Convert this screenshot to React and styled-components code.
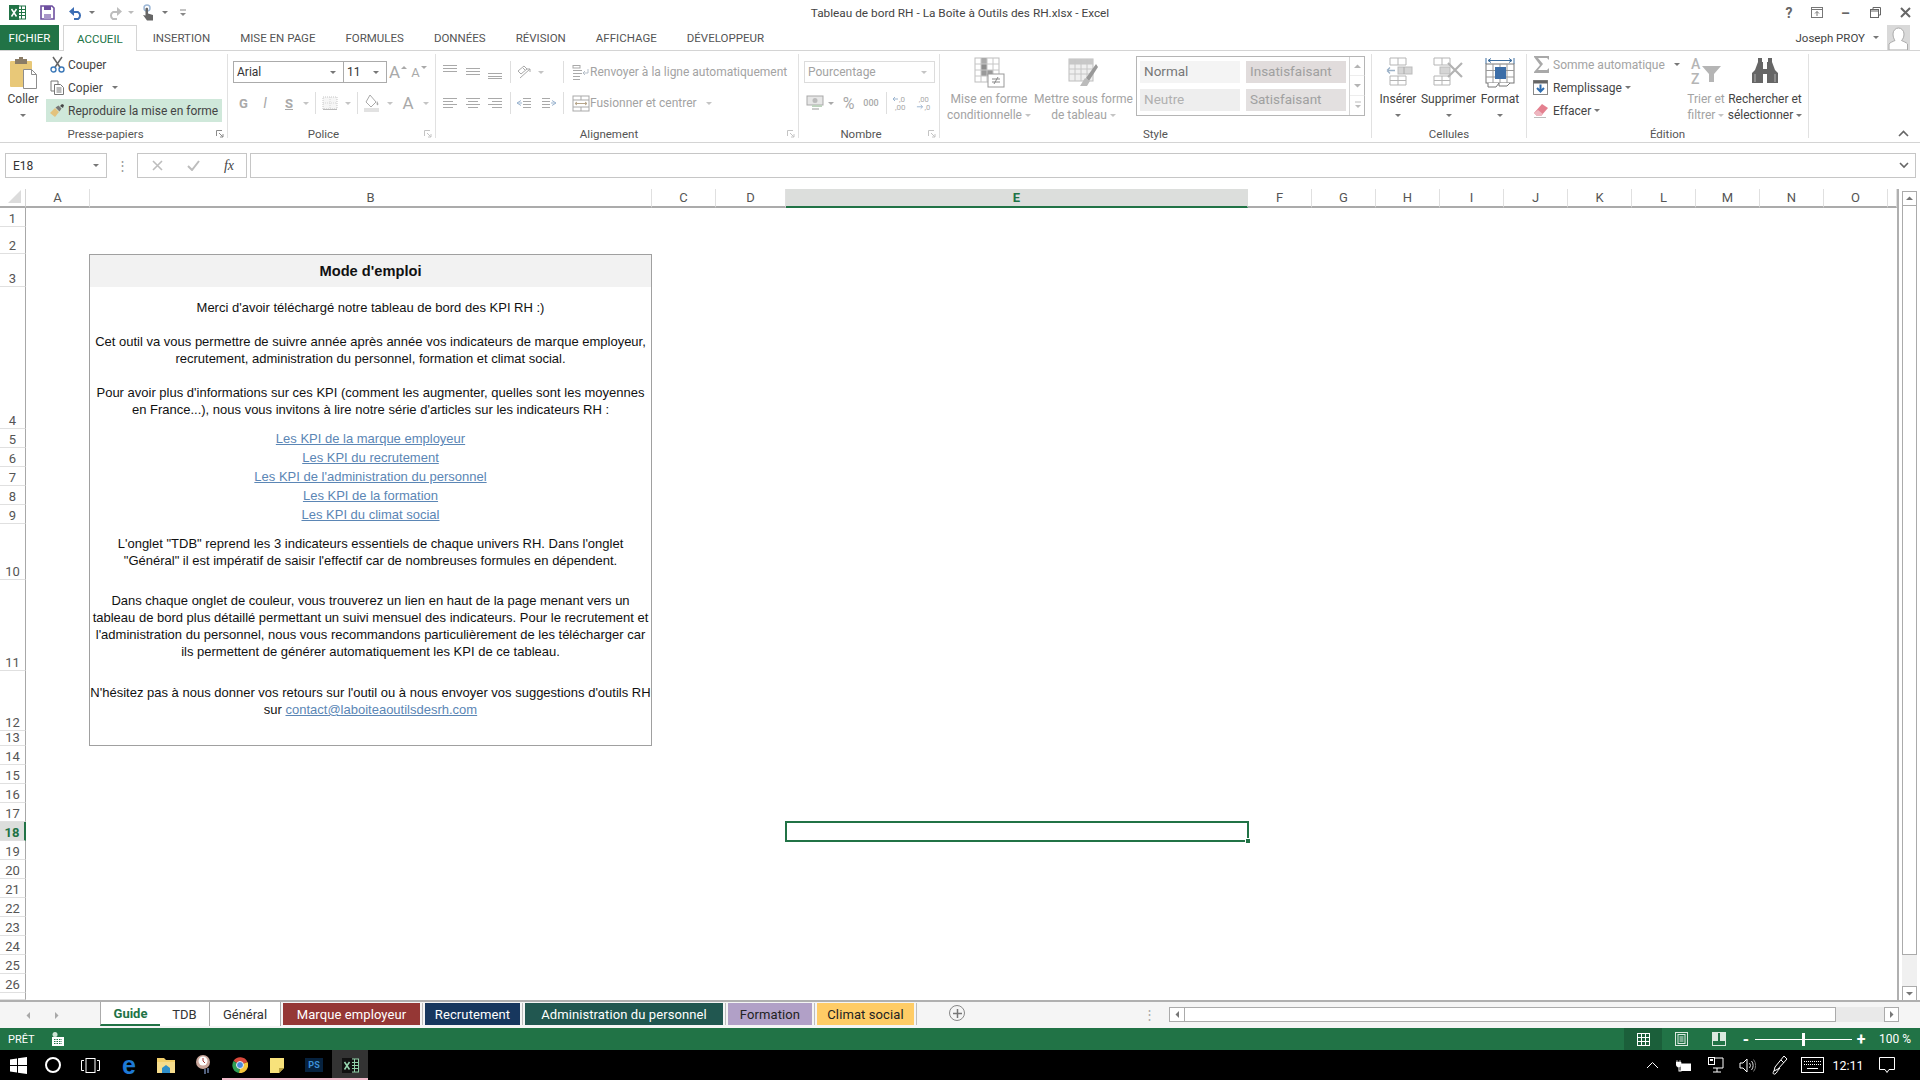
import React from "react";
import styled, { createGlobalStyle } from "styled-components";

const uiFont = '"Roboto", "Open Sans", "Liberation Sans", sans-serif';
const green = "#217346";
const gray = "#a9a9a9";
const textGray = "#a3a3a3";

const GlobalStyle = createGlobalStyle`
  html, body { margin: 0; padding: 0; background: #fff; }
  * { box-sizing: border-box; }
  #root { width: 1920px; height: 1080px; }
`;

const Page = styled.div`
  width: 1920px;
  height: 1080px;
  display: flex;
  flex-direction: column;
  overflow: hidden;
  background: #fff;
  font-family: ${uiFont};
  font-size: 12px;
  color: #444;
`;

/* ---------- shared bits ---------- */

const Cell = styled.span`
  display: inline-flex;
  align-items: center;
  justify-content: center;
  flex: none;
  width: ${(p) => p.$w}px;
  height: 100%;
  margin-left: ${(p) => p.$ml || 0}px;
  color: ${(p) => p.$color || "inherit"};
  font-size: ${(p) => p.$size || 12}px;
  font-weight: ${(p) => p.$weight || 400};
  font-style: ${(p) => (p.$italic ? "italic" : "normal")};
`;

const Caret = styled.i`
  display: inline-block;
  flex: none;
  width: 0;
  height: 0;
  border-left: 3px solid transparent;
  border-right: 3px solid transparent;
  border-top: 3px solid ${(p) => p.$color || "#777"};
`;

const CaretUp = styled.i`
  display: inline-block;
  flex: none;
  width: 0;
  height: 0;
  margin: 0 0 9px 1px;
  border-left: 3px solid transparent;
  border-right: 3px solid transparent;
  border-bottom: 3px solid ${gray};
`;

const CaretTop = styled(Caret)`
  margin: 0 0 9px 1px;
`;

const Sep = styled.span`
  flex: none;
  width: 1px;
  height: 100%;
  background: #dedede;
  margin: 0 ${(p) => p.$r || 0}px 0 ${(p) => p.$l || 0}px;
`;

/* ---------- icons ---------- */

const XlLogo = ({ dark }) => (
  <svg width="17" height="15" viewBox="0 0 17 15">
    <rect x="8" y="1" width="8.5" height="13" fill={dark ? "#111" : "#fff"} stroke={dark ? "#8fcfa8" : green} />
    <path d="M9 4.5h7M9 7.5h7M9 10.5h7M12.5 1v13" stroke={dark ? "#8fcfa8" : green} />
    <rect width="10" height="15" fill={dark ? "#111" : green} />
    <path d="M2.5 4l5 7.5M7.5 4l-5 7.5" stroke={dark ? "#9ad8b2" : "#fff"} strokeWidth="1.5" />
  </svg>
);
const SaveIcon = () => (
  <svg width="15" height="15" viewBox="0 0 15 15">
    <path d="M1 1h11l2 2v11H1z" fill="#fff" stroke="#6d4f9f" strokeWidth="1.6" />
    <rect x="4" y="1" width="7" height="4" fill="#6d4f9f" />
    <rect x="4" y="9" width="7" height="5" fill="#a997c8" />
  </svg>
);
const UndoIcon = ({ color = "#3c6eb4" }) => (
  <svg width="16" height="15" viewBox="0 0 16 15">
    <path d="M4 7h6a4 4 0 0 1 0 7H6" fill="none" stroke={color} strokeWidth="2" />
    <path d="M6 2v9L1 6.5z" fill={color} />
  </svg>
);
const RedoIcon = () => (
  <svg width="16" height="15" viewBox="0 0 16 15">
    <path d="M12 7H6a4 4 0 0 0 0 7h4" fill="none" stroke="#bdbdbd" strokeWidth="2" />
    <path d="M10 2v9l5-4.5z" fill="#bdbdbd" />
  </svg>
);
const TouchIcon = () => (
  <svg width="14" height="18" viewBox="0 0 14 18">
    <circle cx="6" cy="4" r="3" fill="none" stroke="#9db7d6" strokeWidth="1.5" />
    <path d="M4.5 4.5c0-1 2.5-1 2.5 0v5l5 1.5v5.5H6L2 11l2.5.5z" fill="#666" />
  </svg>
);
const Customize = () => (
  <svg width="8" height="8" viewBox="0 0 8 8">
    <path d="M1 1h6" stroke="#888" />
    <path d="M1 4h6L4 7z" fill="#888" />
  </svg>
);
const Launcher = ({ color = "#8a8a8a" }) => (
  <svg width="8" height="8" viewBox="0 0 8 8">
    <path d="M.5 6V.5H6" fill="none" stroke={color} />
    <path d="M3 3l4 4M7 4v3H4" fill="none" stroke={color} />
  </svg>
);
const PasteIcon = () => (
  <svg width="29" height="32" viewBox="0 0 29 32">
    <rect x="1" y="4" width="22" height="26" rx="1" fill="#e8c878" />
    <rect x="6" y="2" width="12" height="5" fill="#8a7c66" />
    <rect x="10" y="0" width="4" height="3" fill="#8a7c66" />
    <path d="M14.5 12.5h8l5 5v14h-13z" fill="#fff" stroke="#8d8d8d" />
    <path d="M22.5 12.5v5h5" fill="none" stroke="#8d8d8d" />
  </svg>
);
const ScissorsIcon = () => (
  <svg width="15" height="17" viewBox="0 0 15 17">
    <path d="M3 1l7.5 11M12 1L4.5 12" stroke="#666" strokeWidth="1.5" />
    <circle cx="3.5" cy="13.5" r="2.5" fill="none" stroke="#3d79b8" strokeWidth="1.4" />
    <circle cx="11.5" cy="13.5" r="2.5" fill="none" stroke="#3d79b8" strokeWidth="1.4" />
  </svg>
);
const CopyIcon = () => (
  <svg width="15" height="15" viewBox="0 0 15 15">
    <path d="M1 1h7v3M1 1v10h3" fill="none" stroke="#777" />
    <path d="M4.5 4.5h6l3 3v7h-9z" fill="#fff" stroke="#777" />
    <path d="M6.5 8h5M6.5 10h5M6.5 12h5" stroke="#777" />
  </svg>
);
const BrushIcon = () => (
  <svg width="16" height="15" viewBox="0 0 16 15">
    <path d="M1 10l5-5 4 4-4 5z" fill="#e3c27d" />
    <path d="M6.5 4.5l3-2 3 3-2 3z" fill="#777" />
    <path d="M11 3l2-2 2 1-1 3z" fill="#444" />
  </svg>
);
const Lines = ({ rows, w = 16, h = 14, color = gray }) => (
  <svg width={w} height={h} viewBox={`0 0 ${w} ${h}`}>
    {rows.map(([a, b, y], i) => (
      <path key={i} d={`M${a} ${y + 0.5}H${b}`} stroke={color} />
    ))}
  </svg>
);
const AlignTop = () => <Lines rows={[[1, 15, 0], [1, 15, 3], [1, 15, 6]]} />;
const AlignMid = () => <Lines rows={[[1, 15, 3], [1, 15, 6], [1, 15, 9]]} />;
const AlignBot = () => <Lines rows={[[1, 15, 8], [1, 15, 11], [1, 15, 13]]} />;
const AlignL = () => <Lines rows={[[1, 15, 2], [1, 11, 5], [1, 15, 8], [1, 11, 11]]} />;
const AlignC = () => <Lines rows={[[1, 15, 2], [3, 13, 5], [1, 15, 8], [3, 13, 11]]} />;
const AlignR = () => <Lines rows={[[1, 15, 2], [5, 15, 5], [1, 15, 8], [5, 15, 11]]} />;
const IndentL = () => (
  <svg width="16" height="13" viewBox="0 0 16 13">
    <path d="M7 1.5h8M7 4.5h8M7 7.5h8M7 10.5h8" stroke={gray} />
    <path d="M5 3.5L1 6l4 2.5M1 6h5" fill="none" stroke="#9cb5d0" />
  </svg>
);
const IndentR = () => (
  <svg width="16" height="13" viewBox="0 0 16 13">
    <path d="M1 1.5h8M1 4.5h8M1 7.5h8M1 10.5h8" stroke={gray} />
    <path d="M11 3.5L15 6l-4 2.5M15 6h-5" fill="none" stroke="#9cb5d0" />
  </svg>
);
const OrientIcon = () => (
  <svg width="16" height="15" viewBox="0 0 16 15">
    <path d="M2 6l6-5 3 3-6 5zM7 3l2 2" fill="none" stroke={gray} />
    <path d="M4 13L14 4M14 4h-3M14 4v3" fill="none" stroke={gray} />
  </svg>
);
const WrapIcon = () => (
  <svg width="18" height="15" viewBox="0 0 18 15">
    <rect x="1" y="0.5" width="7" height="2.5" fill="none" stroke={gray} />
    <path d="M1 5.5h9M1 8.5h9M1 11.5h7M1 14.5h7" stroke={gray} />
    <path d="M16 4v4h-5M13 6l-2 2 2 2" fill="none" stroke="#b6bfc9" />
  </svg>
);
const MergeIcon = () => (
  <svg width="18" height="17" viewBox="0 0 18 17">
    <rect x="1" y="1" width="16" height="15" fill="#fff" stroke={gray} />
    <path d="M1 5h16M1 12h16M9 1v4M9 12v4" stroke={gray} />
    <path d="M3 8.5h12M3 8.5l2-1.5M3 8.5l2 1.5M15 8.5l-2-1.5M15 8.5l-2 1.5" fill="none" stroke="#b6a58a" />
  </svg>
);
const BorderIcon = () => (
  <svg width="16" height="14" viewBox="0 0 16 14">
    <rect x="1" y="1" width="14" height="12" fill="#f6f6f6" stroke="#c6c6c6" strokeDasharray="1 1" />
    <path d="M8 1v12M1 7h14" stroke="#d6d6d6" strokeDasharray="1 1" />
    <path d="M1 13.5h14" stroke="#bbb" />
  </svg>
);
const FillIcon = () => (
  <svg width="17" height="18" viewBox="0 0 17 18">
    <path d="M6 1l6 7-5 5-5-5z" fill="#fff" stroke={gray} />
    <path d="M13 7c1 2 2 3 1 4s-2-1-1-4z" fill={gray} />
    <rect x="0" y="14" width="15" height="4" fill="#e2e2e2" />
  </svg>
);
const NumFormatIcon = () => (
  <svg width="18" height="17" viewBox="0 0 18 17">
    <rect x="1" y="1" width="16" height="9" fill="#e6e6e6" stroke={gray} />
    <circle cx="9" cy="5.5" r="2.5" fill="#bbb" />
    <rect x="6" y="10" width="10" height="2" fill="#bdd2bd" />
    <rect x="6" y="13" width="7" height="2" fill="#ccc" />
  </svg>
);
const DecMoreIcon = () => (
  <svg width="19" height="16" viewBox="0 0 19 16">
    <text x="7" y="7" fontFamily="Roboto, sans-serif" fontSize="8" fill={gray}>,0</text>
    <text x="3" y="15" fontFamily="Roboto, sans-serif" fontSize="8" fill={gray}>,00</text>
    <path d="M6 4H1l2-2M1 4l2 2" fill="none" stroke="#9cb5d0" />
  </svg>
);
const DecLessIcon = () => (
  <svg width="19" height="16" viewBox="0 0 19 16">
    <text x="4" y="7" fontFamily="Roboto, sans-serif" fontSize="8" fill={gray}>,00</text>
    <text x="10" y="15" fontFamily="Roboto, sans-serif" fontSize="8" fill={gray}>,0</text>
    <path d="M2 12h6l-2-2M8 12l-2 2" fill="none" stroke="#9cb5d0" />
  </svg>
);
const CondIcon = () => (
  <svg width="31" height="31" viewBox="0 0 31 31">
    <rect x="1" y="1" width="24" height="24" fill="#fff" stroke="#bdbdbd" />
    <rect x="7" y="1" width="6" height="6" fill="#aaa" />
    <rect x="7" y="7" width="6" height="6" fill="#8d8d8d" />
    <rect x="7" y="13" width="12" height="6" fill="#9a9a9a" />
    <path d="M7 1v24M13 1v24M19 1v24M1 7h24M1 13h24M1 19h24" stroke="#c6c6c6" />
    <rect x="14" y="17" width="16" height="13" fill="#fff" stroke="#999" />
    <path d="M18 22h8M18 25h8M24 20l-4 7" stroke="#888" />
  </svg>
);
const TableIcon = () => (
  <svg width="31" height="31" viewBox="0 0 31 31">
    <rect x="1" y="2" width="24" height="22" fill="#efefef" stroke="#bdbdbd" />
    <rect x="1" y="2" width="24" height="5" fill="#c8c8c8" />
    <path d="M7 2v22M13 2v22M19 2v22M1 7h24M1 12h24M1 17h24" stroke="#c6c6c6" />
    <path d="M28 7L18 21l3 3L30 10z" fill="#999" />
    <path d="M17 21l-5 8h7l3-5z" fill="#bbb" />
  </svg>
);
const InsertIcon = () => (
  <svg width="29" height="29" viewBox="0 0 29 29">
    <path d="M6 1h16v7H6zM14 1v7M6 19h16v9H6zM14 19v9M6 23.5h16" fill="none" stroke="#b5b5b5" />
    <rect x="14" y="10" width="14" height="7" fill="#d5d5d5" stroke="#bbb" />
    <path d="M20 10v7" stroke="#aaa" />
    <path d="M11 13.5H3M3 13.5l3-3M3 13.5l3 3" fill="none" stroke="#9bb1c7" strokeWidth="1.3" />
  </svg>
);
const DeleteIcon = () => (
  <svg width="31" height="29" viewBox="0 0 31 29">
    <path d="M1 1h16v7H1zM9 1v7M1 19h16v9H1zM9 19v9M1 23.5h16" fill="none" stroke="#b5b5b5" />
    <rect x="7" y="10" width="10" height="7" fill="#d5d5d5" stroke="#bbb" />
    <path d="M15 6l14 14M29 6L15 20" stroke="#b3b3b3" strokeWidth="2.2" />
  </svg>
);
const FormatIcon = () => (
  <svg width="30" height="32" viewBox="0 0 30 32">
    <path d="M1 1v6M29 1v6M3 3.5h24M3 3.5l3-2M3 3.5l3 2M27 3.5l-3-2M27 3.5l-3 2" fill="none" stroke="#3f6f9f" />
    <rect x="1" y="7" width="28" height="19" fill="#fff" stroke="#777" />
    <path d="M8 7v19M15 7v19M22 7v19M1 13.5h28M1 20h28" stroke="#999" />
    <rect x="10" y="10" width="11" height="12" fill="#3c6ea8" />
    <path d="M3 26v4h8l3-4M14 26v3h8l3-3" fill="#fff" stroke="#777" />
  </svg>
);
const SigmaIcon = () => (
  <svg width="17" height="17" viewBox="0 0 17 17">
    <path d="M1 0h15v4l-2-2H5l5 6-5 6h9l2-2v5H1v-1l6-7-6-8z" fill="#a9a9a9" />
  </svg>
);
const FillDownIcon = () => (
  <svg width="15" height="15" viewBox="0 0 15 15">
    <rect x="0.5" y="0.5" width="14" height="14" fill="#fff" stroke="#888" />
    <rect x="0.5" y="0.5" width="14" height="3" fill="#666" />
    <path d="M7.5 4.5v7M4 8l3.5 3.5L11 8" fill="none" stroke="#2f6db0" strokeWidth="2" />
  </svg>
);
const EraserIcon = () => (
  <svg width="16" height="15" viewBox="0 0 16 15">
    <path d="M1 10l8-9 6 4-7 8H4z" fill="#e4808f" />
    <path d="M1 10l3 3h4l2-2-5-4z" fill="#eeb6c0" />
    <path d="M1 14.5h12" stroke="#bbb" />
  </svg>
);
const SortIcon = () => (
  <svg width="32" height="29" viewBox="0 0 32 29">
    <text x="1" y="12" fontFamily="Roboto, sans-serif" fontSize="14" fontWeight="500" fill="#b5b5b5">A</text>
    <text x="1" y="27" fontFamily="Roboto, sans-serif" fontSize="14" fontWeight="500" fill="#b5b5b5">Z</text>
    <path d="M12 9h19l-7 8v8h-5v-8z" fill="#b5b5b5" />
  </svg>
);
const BinocularIcon = () => (
  <svg width="26" height="27" viewBox="0 0 26 27">
    <path d="M6 1h4v4h1v7h4V5h1V1h4v4l3 8 3 3v10H15v-9h-4v9H0V16l3-3 3-8z" fill="#666" />
    <path d="M3 17v8M23 17v8" stroke="#999" strokeWidth="1.5" />
  </svg>
);
const CloseX = ({ color = "#666", size = 11, sw = 2 }) => (
  <svg width={size} height={size} viewBox="0 0 11 11">
    <path d="M1 1l9 9M10 1l-9 9" stroke={color} strokeWidth={sw} />
  </svg>
);
const RibbonModeIcon = () => (
  <svg width="12" height="11" viewBox="0 0 12 11">
    <rect x="0.5" y="0.5" width="11" height="10" fill="none" stroke="#777" />
    <path d="M0.5 2.5h11M6 9V4.5M4 6.5l2-2 2 2" fill="none" stroke="#777" />
  </svg>
);
const RestoreIcon = () => (
  <svg width="11" height="11" viewBox="0 0 11 11">
    <path d="M3 2.5V.5h7.5V8H8.5" fill="none" stroke="#666" />
    <rect x="0.5" y="2.5" width="8" height="8" fill="none" stroke="#666" />
    <path d="M.5 4h8" stroke="#666" />
  </svg>
);
const CheckIcon = () => (
  <svg width="13" height="11" viewBox="0 0 13 11">
    <path d="M1 6l4 4 7-9" fill="none" stroke="#bdbdbd" strokeWidth="2" />
  </svg>
);
const Tri = ({ dir }) => (
  <svg width="7" height="7" viewBox="0 0 7 7">
    {dir === "up" && <path d="M0 5h7L3.5 1.5z" fill="#777" />}
    {dir === "down" && <path d="M0 2h7L3.5 5.5z" fill="#777" />}
    {dir === "left" && <path d="M5 0v7L1.5 3.5z" fill="#777" />}
    {dir === "right" && <path d="M2 0v7L5.5 3.5z" fill="#777" />}
  </svg>
);
const WinLogo = () => (
  <svg width="17" height="17" viewBox="0 0 17 17">
    <path d="M0 2.5l7-1v6.500H0zM8 1.300L17 0v8H8zM0 9h7v6.500l-7-1zM8 9h9v8l-9-1.300z" fill="#fff" />
  </svg>
);
const TaskViewIcon = () => (
  <svg width="19" height="15" viewBox="0 0 19 15">
    <rect x="5" y="0.5" width="9" height="14" fill="none" stroke="#fff" />
    <path d="M3 2.5H.5v10H3M16 2.5h2.500v10H16" fill="none" stroke="#fff" />
  </svg>
);
const FolderIcon = () => (
  <svg width="18" height="16" viewBox="0 0 18 16">
    <path d="M0 1h7l2 2h9v3H0z" fill="#f2cf6b" />
    <rect y="5" width="18" height="11" fill="#f6dc8c" />
    <path d="M5 16v-5l4-3 4 3v5z" fill="#2f8fc9" />
  </svg>
);
const ClockAppIcon = () => (
  <svg width="17" height="20" viewBox="0 0 17 20">
    <circle cx="8" cy="7" r="7" fill="#caa79c" />
    <circle cx="8" cy="6" r="4.5" fill="#fff" />
    <path d="M8 3v3l2 2" stroke="#a03030" fill="none" />
    <path d="M10 14v5M13 13v5" stroke="#6c7fa5" strokeWidth="1.5" />
  </svg>
);
const ChromeIcon = () => (
  <svg width="16" height="16" viewBox="0 0 16 16">
    <path d="M8 8L1.5 4A8 8 0 0 1 15.500 5z" fill="#d9483b" />
    <path d="M8 8l7.500-3A8 8 0 0 1 7 16z" fill="#f5c63b" />
    <path d="M8 8l-1 8A8 8 0 0 1 1.500 4z" fill="#2f9e54" />
    <circle cx="8" cy="8" r="3.5" fill="#4a89dc" stroke="#eee" />
  </svg>
);
const NoteIcon = () => (
  <svg width="14" height="15" viewBox="0 0 14 15">
    <path d="M0 0h14v10l-5 5H0z" fill="#f8e27b" />
    <path d="M9 15v-5h5z" fill="#b8a03e" />
  </svg>
);
const PlugBattery = () => (
  <svg width="16" height="13" viewBox="0 0 16 13">
    <path d="M1 1v2M4 1v2M0 3h5v3L3.5 8H1.5L0 6z" fill="#fff" stroke="#fff" strokeWidth=".6" />
    <rect x="5" y="4.5" width="10" height="7.5" fill="#fff" />
    <rect x="3" y="7" width="2" height="5" fill="none" stroke="#fff" />
  </svg>
);
const NetIcon = () => (
  <svg width="16" height="16" viewBox="0 0 16 16">
    <path d="M4 1h11v10H5M9 11v4M5 15h8" fill="none" stroke="#fff" />
    <rect x="0.5" y="0.5" width="6" height="7" fill="#000" stroke="#fff" />
    <rect x="2" y="2" width="3" height="2" fill="#fff" />
  </svg>
);
const VolumeIcon = () => (
  <svg width="17" height="15" viewBox="0 0 17 15">
    <path d="M1 5h3l4-4v13l-4-4H1z" fill="none" stroke="#fff" />
    <path d="M10.5 5a4 4 0 0 1 0 5M12.5 3a7 7 0 0 1 0 9" fill="none" stroke="#ddd" />
    <path d="M14.5 1.500a9.500 9.500 0 0 1 0 12" fill="none" stroke="#777" />
  </svg>
);
const PenIcon = () => (
  <svg width="16" height="20" viewBox="0 0 16 20">
    <path d="M12 1l3 3-9 10-4 2 1-4zM9 5l3 3" fill="none" stroke="#fff" />
    <path d="M3 15c-3 2-2 5 0 4s2-3 5-6" fill="none" stroke="#fff" />
  </svg>
);
const KeyboardIcon = () => (
  <svg width="23" height="16" viewBox="0 0 23 16">
    <rect x="0.5" y="0.5" width="22" height="15" fill="none" stroke="#fff" />
    <path d="M3 4.5h17M3 7.5h17" stroke="#fff" strokeDasharray="1 1" />
    <path d="M6 11.5h11" stroke="#fff" />
  </svg>
);
const NotifyIcon = () => (
  <svg width="17" height="17" viewBox="0 0 17 17">
    <path d="M.5.5h15v12H10l-2 3-2-3H.5z" fill="none" stroke="#fff" />
  </svg>
);
const GridViewIcon = () => (
  <svg width="13" height="13" viewBox="0 0 13 13">
    <rect x="0.5" y="0.5" width="12" height="12" fill="none" stroke="#fff" />
    <path d="M4.5 0v13M8.5 0v13M0 4.5h13M0 8.5h13" stroke="#fff" />
  </svg>
);
const PageViewIcon = () => (
  <svg width="13" height="14" viewBox="0 0 13 14">
    <rect x="0.5" y="0.5" width="12" height="13" fill="none" stroke="#dbe9e0" />
    <rect x="3" y="2.5" width="7" height="9" fill="none" stroke="#dbe9e0" />
    <path d="M4.5 5h4M4.5 7h4M4.5 9h4" stroke="#dbe9e0" />
  </svg>
);
const BreakViewIcon = () => (
  <svg width="14" height="14" viewBox="0 0 14 14">
    <rect x="0.5" y="0.5" width="13" height="13" fill="none" stroke="#dbe9e0" />
    <rect x="1" y="1" width="5" height="8" fill="#dbe9e0" />
    <rect x="8" y="1" width="5" height="8" fill="#dbe9e0" />
  </svg>
);
const MacroIcon = () => (
  <svg width="14" height="14" viewBox="0 0 14 14">
    <circle cx="5" cy="2.5" r="2.5" fill="#cfe5d6" />
    <rect x="2" y="5" width="12" height="9" fill="#fff" />
    <path d="M4 7.5h8M4 9.5h8M4 11.5h8" stroke={green} strokeDasharray="1.500 1" />
  </svg>
);

/* ---------- title bar ---------- */

const TitleBar = styled.div`
  flex: none;
  height: 25px;
  display: grid;
  grid-template-columns: 1fr auto 1fr;
  align-items: center;
`;
const QuickAccess = styled.div`
  display: flex;
  height: 100%;
  padding-left: 6px;
  align-items: center;
`;
const WindowTitle = styled.div`
  font-size: 11.8px;
  color: #444;
`;
const WindowControls = styled.div`
  display: flex;
  height: 100%;
  justify-content: flex-end;
`;

/* ---------- tabs ---------- */

const TabRow = styled.div`
  flex: none;
  height: 25px;
  display: flex;
  align-items: stretch;
  font-size: 11.5px;
  position: relative;
  z-index: 1;
`;
const FileTab = styled.div`
  width: 59px;
  background: ${green};
  color: #fff;
  display: flex;
  align-items: center;
  justify-content: center;
  margin-right: 4px;
`;
const RibbonTab = styled.div`
  display: flex;
  align-items: center;
  padding: 0 ${(p) => (p.$active ? 13 : 15)}px;
  color: ${(p) => (p.$active ? green : "#555")};
  ${(p) => p.$active && "background: #fff; border: 1px solid #d4d4d4; border-bottom: none; height: 26px; margin-right: 1px;"}
`;
const UserBox = styled.div`
  margin-left: auto;
  display: flex;
  align-items: center;
  gap: 8px;
  padding-right: 10px;
  height: 25px;
`;
const Avatar = styled.div`
  width: 23px;
  height: 25px;
  background: #d9d9d9;
  display: flex;
  align-items: flex-end;
  justify-content: center;
  overflow: hidden;
`;

/* ---------- ribbon ---------- */

const Ribbon = styled.div`
  flex: none;
  height: 93px;
  display: flex;
  padding-top: 3px;
  border-top: 1px solid #d4d4d4;
  border-bottom: 1px solid #d4d4d4;
  background: #fff;
`;
const Group = styled.div`
  flex: none;
  width: ${(p) => p.$w}px;
  height: 84px;
  border-right: 1px solid #e1e1e1;
  display: flex;
  flex-direction: column;
`;
const GroupBody = styled.div`
  flex: none;
  height: 72px;
  display: flex;
  padding-left: ${(p) => p.$pad || 0}px;
`;
const GroupLabel = styled.div`
  flex: none;
  height: 16px;
  display: grid;
  grid-template-columns: 1fr auto 1fr;
  align-items: center;
  padding-right: ${(p) => (p.$launch ? 16 : 0)}px;
  color: #555;
  font-size: 11.5px;
`;
const LauncherSlot = styled.span`
  grid-column: 3;
  justify-self: end;
  display: flex;
  margin-right: -13px;
`;
const CollapseArea = styled.div`
  flex: 1;
  display: flex;
  align-items: flex-end;
  justify-content: flex-end;
  padding: 0 11px 5px 0;
`;
const BigButton = styled.div`
  flex: none;
  width: ${(p) => p.$w}px;
  display: flex;
  flex-direction: column;
  align-items: center;
  color: ${(p) => (p.$off ? textGray : "#444")};
`;
const BigIcon = styled.div`
  height: 37px;
  display: flex;
  align-items: flex-start;
  justify-content: center;
  padding-top: 3px;
`;
const BigLine = styled.div`
  height: 16px;
  line-height: 16px;
  white-space: nowrap;
  display: flex;
  align-items: center;
  gap: 3px;
`;
const SmallStack = styled.div`
  flex: none;
  width: ${(p) => p.$w}px;
  margin-top: -1px;
  display: flex;
  flex-direction: column;
`;
const SmallRow = styled.div`
  height: 23px;
  display: flex;
  align-items: center;
  color: ${(p) => (p.$off ? textGray : "#444")};
  background: ${(p) => (p.$on ? "#cfe8da" : "transparent")};
  white-space: nowrap;
`;
const SmallIcon = styled.span`
  flex: none;
  width: ${(p) => p.$w || 22}px;
  display: flex;
  justify-content: ${(p) => (p.$left ? "flex-start" : "center")};
`;
const RowStack = styled.div`
  flex: 1;
  display: flex;
  flex-direction: column;
  padding-top: 7px;
  gap: 9px;
`;
const ToolRow = styled.div`
  height: 22px;
  display: flex;
  align-items: center;
  color: ${textGray};
  white-space: nowrap;
`;
const Combo = styled.div`
  flex: none;
  width: ${(p) => p.$w}px;
  height: 22px;
  border: 1px solid ${(p) => (p.$off ? "#dcdcdc" : "#ababab")};
  background: #fff;
  display: flex;
  align-items: center;
  justify-content: space-between;
  padding: 0 7px 0 3px;
  color: ${(p) => (p.$off ? textGray : "#333")};
  ${(p) => p.$join && "margin-left: -1px;"}
`;
const Gallery = styled.div`
  flex: none;
  margin: 2px 0 0 2px;
  width: 229px;
  height: 60px;
  border: 1px solid #b5b5b5;
  display: flex;
`;
const StyleGrid = styled.div`
  flex: none;
  display: grid;
  grid-template-columns: 100px 100px;
  grid-auto-rows: 22px;
  column-gap: 6px;
  row-gap: 6px;
  padding: 4px 0 0 3px;
`;
const StyleCell = styled.div`
  background: ${(p) => p.$bg};
  color: ${(p) => p.$fg};
  font-size: 13.5px;
  padding: 0 0 2px 4px;
  display: flex;
  align-items: center;
`;
const GalleryScroll = styled.div`
  flex: none;
  margin-left: 3px;
  width: 16px;
  display: grid;
  grid-template-rows: 1fr 1fr 1fr;
  border-left: 1px solid #d4d4d4;
`;
const GalleryBtn = styled.div`
  display: flex;
  align-items: center;
  justify-content: center;
  border-bottom: ${(p) => (p.$last ? "none" : "1px solid #e0e0e0")};
  opacity: 0.55;
`;
const SmallCaps = styled.span`
  font-size: ${(p) => p.$size}px;
  color: ${(p) => p.$color || gray};
  font-weight: ${(p) => p.$weight || 500};
`;

/* ---------- formula bar ---------- */

const FormulaBar = styled.div`
  flex: none;
  height: 46px;
  padding: 10px 4px 0 5px;
  display: flex;
  align-items: flex-start;
`;
const NameBox = styled.div`
  width: 102px;
  height: 25px;
  border: 1px solid #c6c6c6;
  display: flex;
  align-items: center;
  justify-content: space-between;
  padding: 0 7px;
  color: #333;
`;
const Dots = styled.div`
  flex: none;
  width: 30px;
  height: 25px;
  display: flex;
  align-items: center;
  justify-content: center;
  color: #999;
  font-size: 13px;
`;
const FormulaBtns = styled.div`
  width: 110px;
  height: 25px;
  border: 1px solid #c6c6c6;
  display: flex;
  align-items: center;
  margin-right: 3px;
`;
const FxMark = styled.span`
  font-family: "Liberation Serif", serif;
  font-style: italic;
  font-size: 14px;
  color: #444;
`;
const FormulaInput = styled.div`
  flex: 1;
  height: 25px;
  border: 1px solid #c6c6c6;
  display: flex;
  align-items: center;
  justify-content: flex-end;
  padding-right: 6px;
`;

/* ---------- sheet ---------- */

const SheetArea = styled.div`
  flex: none;
  height: 811px;
  display: flex;
`;
const Grid = styled.div`
  flex: none;
  width: 1899px;
  display: grid;
  grid-template-columns: 26px 64px 562px 64px 70px 462px repeat(10, 64px) 1fr;
  grid-template-rows: 19px 19px 27px 33px 142px repeat(5, 19px) 56px 91px 60px 15px repeat(13, 19px) 7px;
  border-right: 2px solid #b0b0b0;
  overflow: hidden;
`;
const Corner = styled.div`
  grid-column: 1;
  grid-row: 1;
  border-bottom: 2px solid #ababab;
  border-right: 1px solid #d4d4d4;
  display: flex;
  align-items: flex-end;
  justify-content: flex-end;
  padding: 0 4px 3px 0;
`;
const ColHead = styled.div`
  grid-row: 1;
  grid-column: ${(p) => p.$col};
  display: flex;
  align-items: center;
  justify-content: center;
  font-size: 13px;
  color: ${(p) => (p.$on ? green : "#555")};
  font-weight: ${(p) => (p.$on ? 700 : 400)};
  background: ${(p) => (p.$on ? "#dcdedc" : "#fff")};
  border-right: 1px solid ${(p) => (p.$on ? "#dcdedc" : "#e0e0e0")};
  border-bottom: 2px solid ${(p) => (p.$on ? green : "#ababab")};
`;
const RowHead = styled.div`
  grid-column: 1;
  grid-row: ${(p) => p.$row + 1};
  display: flex;
  align-items: ${(p) => (p.$clip ? "flex-start" : "flex-end")};
  justify-content: center;
  padding-top: ${(p) => (p.$clip ? 4 : 0)}px;
  overflow: hidden;
  font-size: 13px;
  line-height: 14px;
  color: ${(p) => (p.$on ? green : "#555")};
  font-weight: ${(p) => (p.$on ? 700 : 400)};
  background: ${(p) => (p.$on ? "#dcdedc" : "#fff")};
  border-bottom: 1px solid #e0e0e0;
  border-right: ${(p) => (p.$on ? `2px solid ${green}` : "1px solid #a8a8a8")};
`;
const ModeBox = styled.div`
  grid-column: 3;
  grid-row: 4 / 15;
  margin-left: -1px;
  border: 1px solid #a0a0a0;
  display: grid;
  grid-template-rows: 32px 142px repeat(5, 19px) 56px 91px 60px 1fr;
  font-family: "Liberation Sans", Arial, sans-serif;
  font-size: 13px;
  line-height: 17px;
  color: #111;
  text-align: center;
  background: #fff;
`;
const ModeTitle = styled.div`
  background: #f2f2f2;
  font-weight: 700;
  font-size: 14.67px;
  display: flex;
  align-items: center;
  justify-content: center;
`;
const ModeCell = styled.div`
  display: flex;
  flex-direction: column;
  align-items: center;
  justify-content: center;
  white-space: nowrap;
`;
const BlankLine = styled.div`
  height: 17px;
`;
const ModeLink = styled.a`
  color: #5b86b5;
  text-decoration: underline;
`;
const SelectedCell = styled.div`
  grid-column: 6;
  grid-row: 19;
  margin: -1px;
  border: 2px solid ${green};
  position: relative;
`;
const FillHandle = styled.span`
  position: absolute;
  right: -4px;
  bottom: -4px;
  width: 6px;
  height: 6px;
  background: ${green};
  border: 1px solid #fff;
`;
const VScroll = styled.div`
  flex: none;
  width: 15px;
  margin-left: 3px;
  padding-top: 2px;
  display: flex;
  flex-direction: column;
`;
const ScrollBtn = styled.div`
  flex: none;
  width: ${(p) => p.$w || 15}px;
  height: 15px;
  border: 1px solid #ababab;
  background: #fff;
  display: flex;
  align-items: center;
  justify-content: center;
`;
const VThumb = styled.div`
  flex: none;
  height: 749px;
  background: #fff;
  border: 1px solid #ababab;
  border-top: none;
`;
const VTrack = styled.div`
  flex: none;
  height: 31px;
  background: #f0f0f0;
`;

/* ---------- sheet tabs ---------- */

const SheetBar = styled.div`
  flex: none;
  height: 28px;
  background: #f5f5f5;
  border-top: 2px solid #b0b0b0;
  display: flex;
`;
const TabNav = styled.div`
  flex: none;
  width: 100px;
  display: flex;
  align-items: center;
  padding-left: 25px;
  gap: 21px;
  opacity: 0.6;
`;
const PlainTab = styled.div`
  flex: none;
  width: ${(p) => p.$w}px;
  height: 24px;
  background: #fff;
  display: flex;
  align-items: center;
  justify-content: center;
  color: ${(p) => (p.$on ? green : "#333")};
  font-size: 13px;
  font-weight: ${(p) => (p.$on ? 700 : 400)};
  border-right: 1px solid #ababab;
  ${(p) => p.$on && `border-left: 1px solid #ababab; border-right: none; border-bottom: 2px solid ${green};`}
`;
const ColorTab = styled.div`
  flex: none;
  width: ${(p) => p.$w}px;
  height: 22px;
  margin: 1px 5px 0 ${(p) => p.$ml || 0}px;
  background: ${(p) => p.$bg};
  color: ${(p) => p.$fg};
  font-size: 13px;
  letter-spacing: 0.1px;
  display: flex;
  align-items: center;
  justify-content: center;
  position: relative;
  &::after {
    content: "";
    position: absolute;
    right: -3px;
    top: 0;
    bottom: 0;
    width: 1px;
    background: #bdbdbd;
  }
`;
const PlusBtn = styled.div`
  flex: none;
  margin: 3px 0 0 30px;
  width: 16px;
  height: 16px;
  border: 1.5px solid #888;
  border-radius: 50%;
  display: flex;
  align-items: center;
  justify-content: center;
`;
const BarDots = styled.div`
  margin-left: auto;
  margin-right: 13px;
  color: #aaa;
  font-size: 13px;
  display: flex;
  align-items: center;
  height: 24px;
`;
const HScroll = styled.div`
  flex: none;
  width: 730px;
  height: 15px;
  margin: 5px 21px 0 0;
  display: flex;
`;
const HThumb = styled.div`
  flex: none;
  width: 651px;
  background: #fff;
  border: 1px solid #ababab;
  border-left: none;
`;
const HTrack = styled.div`
  flex: 1;
  background: #e9e9e9;
`;

/* ---------- status & task bars ---------- */

const StatusBar = styled.div`
  flex: none;
  height: 22px;
  background: ${green};
  color: #fff;
  font-size: 11px;
  display: flex;
  align-items: center;
  padding-left: 8px;
`;
const MacroSlot = styled.span`
  margin-left: 15px;
  display: flex;
`;
const ViewBtn = styled.div`
  flex: none;
  width: ${(p) => p.$w}px;
  height: 22px;
  display: flex;
  align-items: center;
  justify-content: center;
  background: ${(p) => (p.$on ? "#1b5f3a" : "transparent")};
`;
const ViewGroup = styled.div`
  margin-left: auto;
  display: flex;
  align-items: center;
`;
const Zoomer = styled.div`
  flex: none;
  width: 97px;
  height: 1px;
  margin: 0 4px;
  background: #fff;
  display: flex;
  align-items: center;
  justify-content: center;
`;
const ZoomThumb = styled.span`
  width: 3px;
  height: 13px;
  background: #fff;
`;
const ZoomSign = styled.span`
  font-size: 16px;
  font-weight: 700;
  width: 10px;
  text-align: center;
  margin-left: ${(p) => p.$ml || 0}px;
`;
const ZoomValue = styled.span`
  width: 54px;
  text-align: right;
  padding-right: 9px;
  font-size: 12px;
`;
const TaskBar = styled.div`
  flex: none;
  height: 30px;
  background: #000;
  color: #fff;
  display: flex;
  align-items: stretch;
`;
const TaskItem = styled.div`
  flex: none;
  width: ${(p) => p.$w}px;
  display: flex;
  align-items: center;
  justify-content: center;
  font-size: 12.5px;
  background: ${(p) => (p.$on ? "#333" : "transparent")};
  border-bottom: ${(p) => (p.$open ? "2px solid #eeb9c9" : "none")};
  padding-top: ${(p) => (p.$open ? "2px" : 0)};
`;
const Cortana = styled.span`
  width: 16px;
  height: 16px;
  border: 2.5px solid #fff;
  border-radius: 50%;
`;
const EdgeMark = styled.span`
  color: #1e7ad6;
  font-family: "Liberation Sans", sans-serif;
  font-weight: 700;
  font-size: 25px;
  line-height: 24px;
`;
const PsMark = styled.span`
  width: 18px;
  height: 14px;
  background: #06223f;
  color: #3d8fd6;
  font-size: 9px;
  font-weight: 700;
  display: flex;
  align-items: center;
  justify-content: center;
`;
const Tray = styled.div`
  margin-left: auto;
  display: flex;
  align-items: stretch;
`;

/* ---------- data ---------- */

const ribbonTabs = ["INSERTION", "MISE EN PAGE", "FORMULES", "DONNÉES", "RÉVISION", "AFFICHAGE", "DÉVELOPPEUR"];
const colHeads = [
  ["A", 2], ["B", 3], ["C", 4], ["D", 5], ["E", 6], ["F", 7], ["G", 8], ["H", 9],
  ["I", 10], ["J", 11], ["K", 12], ["L", 13], ["M", 14], ["N", 15], ["O", 16], ["", 17],
];
const colorTabs = [
  ["Marque employeur", 137, "#953735", "#fff", 2],
  ["Recrutement", 95, "#17375e", "#fff"],
  ["Administration du personnel", 198, "#215750", "#fff"],
  ["Formation", 84, "#b1a0c7", "#222"],
  ["Climat social", 97, "#ffcc66", "#222"],
];
const kpiLinks = [
  "Les KPI de la marque employeur",
  "Les KPI du recrutement",
  "Les KPI de l'administration du personnel",
  "Les KPI de la formation",
  "Les KPI du climat social",
];

export default function App() {
  const rows = Array.from({ length: 27 }, (_, i) => i + 1);
  return (
    <Page>
      <GlobalStyle />
      <TitleBar>
        <QuickAccess>
          <Cell $w={22}><XlLogo /></Cell>
          <Cell $w={38}><SaveIcon /></Cell>
          <Cell $w={20}><UndoIcon /></Cell>
          <Cell $w={12}><Caret /></Cell>
          <Cell $w={24} $ml={5}><RedoIcon /></Cell>
          <Cell $w={8}><Caret $color="#bbb" /></Cell>
          <Cell $w={26}><TouchIcon /></Cell>
          <Cell $w={8}><Caret /></Cell>
          <Cell $w={28}><Customize /></Cell>
        </QuickAccess>
        <WindowTitle>Tableau de bord RH - La Boîte à Outils des RH.xlsx - Excel</WindowTitle>
        <WindowControls>
          <Cell $w={28} $size={14} $weight={700} $color="#666">?</Cell>
          <Cell $w={28}><RibbonModeIcon /></Cell>
          <Cell $w={29} $size={14} $weight={700} $color="#666">–</Cell>
          <Cell $w={31}><RestoreIcon /></Cell>
          <Cell $w={29}><CloseX /></Cell>
        </WindowControls>
      </TitleBar>

      <TabRow>
        <FileTab>FICHIER</FileTab>
        <RibbonTab $active>ACCUEIL</RibbonTab>
        {ribbonTabs.map((label) => (
          <RibbonTab key={label}>{label}</RibbonTab>
        ))}
        <UserBox>
          <span>Joseph PROY</span>
          <Caret />
          <Avatar>
            <svg width="21" height="23" viewBox="0 0 21 23">
              <path d="M5 7a5.500 6 0 0 1 11 0c0 3-1 5-2.500 6.500 2 1 5 2 6 3.500v6H1v-6c1-1.500 4-2.500 6-3.500C6 12 5 10 5 7z" fill="#fff" stroke="#aaa" />
            </svg>
          </Avatar>
        </UserBox>
      </TabRow>

      <Ribbon>
        <Group $w={228}>
          <GroupBody>
            <BigButton $w={46}>
              <BigIcon><PasteIcon /></BigIcon>
              <BigLine>Coller</BigLine>
              <BigLine><Caret /></BigLine>
            </BigButton>
            <SmallStack $w={176}>
              <SmallRow><SmallIcon $w={22}><ScissorsIcon /></SmallIcon>Couper</SmallRow>
              <SmallRow><SmallIcon $w={22}><CopyIcon /></SmallIcon>Copier<Cell $w={24}><Caret /></Cell></SmallRow>
              <SmallRow $on><SmallIcon $w={22}><BrushIcon /></SmallIcon>Reproduire la mise en forme</SmallRow>
            </SmallStack>
          </GroupBody>
          <GroupLabel $launch>
            <span />
            <span>Presse-papiers</span>
            <LauncherSlot><Launcher /></LauncherSlot>
          </GroupLabel>
        </Group>

        <Group $w={208}>
          <GroupBody $pad={5}>
            <RowStack>
              <ToolRow>
                <Combo $w={111}>Arial<Caret /></Combo>
                <Combo $w={44} $join>11<Caret /></Combo>
                <Cell $w={22} $size={17} $color={gray}>A<CaretUp /></Cell>
                <Cell $w={20} $size={13} $color={gray}>A<CaretTop $color={gray} /></Cell>
              </ToolRow>
              <ToolRow>
                <Cell $w={21} $size={13} $weight={700} $color={gray}>G</Cell>
                <Cell $w={22} $size={14} $italic $color={gray}>I</Cell>
                <Cell $w={26} $size={13} $weight={700} $color={gray}><u>S</u></Cell>
                <Cell $w={8}><Caret $color="#c4c4c4" /></Cell>
                <Sep $l={5} />
                <Cell $w={28}><BorderIcon /></Cell>
                <Cell $w={8}><Caret $color="#c4c4c4" /></Cell>
                <Sep $l={5} />
                <Cell $w={28}><FillIcon /></Cell>
                <Cell $w={8}><Caret $color="#c4c4c4" /></Cell>
                <Cell $w={28} $size={17} $color={gray}>A</Cell>
                <Cell $w={8}><Caret $color="#c4c4c4" /></Cell>
              </ToolRow>
            </RowStack>
          </GroupBody>
          <GroupLabel $launch>
            <span />
            <span>Police</span>
            <LauncherSlot><Launcher color="#c4c4c4" /></LauncherSlot>
          </GroupLabel>
        </Group>

        <Group $w={363}>
          <GroupBody $pad={3}>
            <RowStack>
              <ToolRow>
                <Cell $w={22}><AlignTop /></Cell>
                <Cell $w={23}><AlignMid /></Cell>
                <Cell $w={22}><AlignBot /></Cell>
                <Sep $l={4} />
                <Cell $w={26}><OrientIcon /></Cell>
                <Cell $w={8}><Caret $color="#c4c4c4" /></Cell>
                <Sep $l={18} $r={7} />
                <Cell $w={19}><WrapIcon /></Cell>
                Renvoyer à la ligne automatiquement
              </ToolRow>
              <ToolRow>
                <Cell $w={22}><AlignL /></Cell>
                <Cell $w={23}><AlignC /></Cell>
                <Cell $w={22}><AlignR /></Cell>
                <Sep $l={4} />
                <Cell $w={26}><IndentL /></Cell>
                <Cell $w={23}><IndentR /></Cell>
                <Sep $l={3} $r={7} />
                <Cell $w={19}><MergeIcon /></Cell>
                Fusionner et centrer
                <Cell $w={24}><Caret $color="#c4c4c4" /></Cell>
              </ToolRow>
            </RowStack>
          </GroupBody>
          <GroupLabel $launch>
            <span />
            <span>Alignement</span>
            <LauncherSlot><Launcher color="#c4c4c4" /></LauncherSlot>
          </GroupLabel>
        </Group>

        <Group $w={141}>
          <GroupBody $pad={5}>
            <RowStack>
              <ToolRow>
                <Combo $w={131} $off>Pourcentage<Caret $color="#c4c4c4" /></Combo>
              </ToolRow>
              <ToolRow>
                <Cell $w={22}><NumFormatIcon /></Cell>
                <Cell $w={10}><Caret $color={gray} /></Cell>
                <Cell $w={25} $size={16} $color={gray}>%</Cell>
                <Cell $w={20}><SmallCaps $size={9}>000</SmallCaps></Cell>
                <Sep $l={5} />
                <Cell $w={28}><DecMoreIcon /></Cell>
                <Cell $w={18}><DecLessIcon /></Cell>
              </ToolRow>
            </RowStack>
          </GroupBody>
          <GroupLabel $launch>
            <span />
            <span>Nombre</span>
            <LauncherSlot><Launcher color="#c4c4c4" /></LauncherSlot>
          </GroupLabel>
        </Group>

        <Group $w={432}>
          <GroupBody $pad={5}>
            <BigButton $w={88} $off>
              <BigIcon><CondIcon /></BigIcon>
              <BigLine>Mise en forme</BigLine>
              <BigLine>conditionnelle <Caret $color="#c4c4c4" /></BigLine>
            </BigButton>
            <BigButton $w={101} $off>
              <BigIcon><TableIcon /></BigIcon>
              <BigLine>Mettre sous forme</BigLine>
              <BigLine>de tableau <Caret $color="#c4c4c4" /></BigLine>
            </BigButton>
            <Gallery>
              <StyleGrid>
                <StyleCell $bg="#f4f4f4" $fg="#777">Normal</StyleCell>
                <StyleCell $bg="#e1dcdc" $fg="#a0a0a0">Insatisfaisant</StyleCell>
                <StyleCell $bg="#eeeeee" $fg="#b0b0b0">Neutre</StyleCell>
                <StyleCell $bg="#e3e0e0" $fg="#a0a0a0">Satisfaisant</StyleCell>
              </StyleGrid>
              <GalleryScroll>
                <GalleryBtn><Tri dir="up" /></GalleryBtn>
                <GalleryBtn><Tri dir="down" /></GalleryBtn>
                <GalleryBtn $last><Customize /></GalleryBtn>
              </GalleryScroll>
            </Gallery>
          </GroupBody>
          <GroupLabel>
            <span />
            <span>Style</span>
          </GroupLabel>
        </Group>

        <Group $w={155}>
          <GroupBody $pad={3}>
            <BigButton $w={46}>
              <BigIcon><InsertIcon /></BigIcon>
              <BigLine>Insérer</BigLine>
              <BigLine><Caret /></BigLine>
            </BigButton>
            <BigButton $w={55}>
              <BigIcon><DeleteIcon /></BigIcon>
              <BigLine>Supprimer</BigLine>
              <BigLine><Caret /></BigLine>
            </BigButton>
            <BigButton $w={48}>
              <BigIcon><FormatIcon /></BigIcon>
              <BigLine>Format</BigLine>
              <BigLine><Caret /></BigLine>
            </BigButton>
          </GroupBody>
          <GroupLabel>
            <span />
            <span>Cellules</span>
          </GroupLabel>
        </Group>

        <Group $w={282}>
          <GroupBody $pad={6}>
            <SmallStack $w={153}>
              <SmallRow $off>
                <SmallIcon $w={20} $left><SigmaIcon /></SmallIcon>
                Somme automatique
                <Cell $w={24}><Caret /></Cell>
              </SmallRow>
              <SmallRow>
                <SmallIcon $w={20} $left><FillDownIcon /></SmallIcon>
                Remplissage
                <Cell $w={12}><Caret /></Cell>
              </SmallRow>
              <SmallRow>
                <SmallIcon $w={20} $left><EraserIcon /></SmallIcon>
                Effacer
                <Cell $w={12}><Caret /></Cell>
              </SmallRow>
            </SmallStack>
            <BigButton $w={40} $off>
              <BigIcon><SortIcon /></BigIcon>
              <BigLine>Trier et</BigLine>
              <BigLine>filtrer <Caret $color="#c4c4c4" /></BigLine>
            </BigButton>
            <BigButton $w={78}>
              <BigIcon><BinocularIcon /></BigIcon>
              <BigLine>Rechercher et</BigLine>
              <BigLine>sélectionner <Caret /></BigLine>
            </BigButton>
          </GroupBody>
          <GroupLabel>
            <span />
            <span>Édition</span>
          </GroupLabel>
        </Group>

        <CollapseArea>
          <svg width="11" height="7" viewBox="0 0 11 7">
            <path d="M1 6l4.5-4.500L10 6" fill="none" stroke="#666" strokeWidth="1.6" />
          </svg>
        </CollapseArea>
      </Ribbon>

      <FormulaBar>
        <NameBox>E18<Caret /></NameBox>
        <Dots>⋮</Dots>
        <FormulaBtns>
          <Cell $w={38}><CloseX color="#bdbdbd" sw={1.6} /></Cell>
          <Cell $w={34}><CheckIcon /></Cell>
          <Cell $w={38}><FxMark>fx</FxMark></Cell>
        </FormulaBtns>
        <FormulaInput>
          <svg width="10" height="7" viewBox="0 0 10 7">
            <path d="M1 1l4 4 4-4" fill="none" stroke="#666" strokeWidth="1.6" />
          </svg>
        </FormulaInput>
      </FormulaBar>

      <SheetArea>
        <Grid>
          <Corner>
            <svg width="13" height="13" viewBox="0 0 13 13"><path d="M13 0v13H0z" fill="#dcdcdc" /></svg>
          </Corner>
          {colHeads.map(([label, col]) => (
            <ColHead key={col} $col={col} $on={label === "E"}>{label}</ColHead>
          ))}
          {rows.map((n) => (
            <RowHead key={n} $row={n} $on={n === 18} $clip={n === 27}>{n}</RowHead>
          ))}
          <ModeBox>
            <ModeTitle>Mode d'emploi</ModeTitle>
            <ModeCell>
              <div>Merci d'avoir téléchargé notre tableau de bord des KPI RH :)</div>
              <BlankLine />
              <div>Cet outil va vous permettre de suivre année après année vos indicateurs de marque employeur,</div>
              <div>recrutement, administration du personnel, formation et climat social.</div>
              <BlankLine />
              <div>Pour avoir plus d'informations sur ces KPI (comment les augmenter, quelles sont les moyennes</div>
              <div>en France...), nous vous invitons à lire notre série d'articles sur les indicateurs RH :</div>
            </ModeCell>
            {kpiLinks.map((l) => (
              <ModeCell key={l}><ModeLink>{l}</ModeLink></ModeCell>
            ))}
            <ModeCell>
              <div>L'onglet "TDB" reprend les 3 indicateurs essentiels de chaque univers RH. Dans l'onglet</div>
              <div>"Général" il est impératif de saisir l'effectif car de nombreuses formules en dépendent.</div>
            </ModeCell>
            <ModeCell>
              <div>Dans chaque onglet de couleur, vous trouverez un lien en haut de la page menant vers un</div>
              <div>tableau de bord plus détaillé permettant un suivi mensuel des indicateurs. Pour le recrutement et</div>
              <div>l'administration du personnel, nous vous recommandons particulièrement de les télécharger car</div>
              <div>ils permettent de générer automatiquement les KPI de ce tableau.</div>
            </ModeCell>
            <ModeCell>
              <div>N'hésitez pas à nous donner vos retours sur l'outil ou à nous envoyer vos suggestions d'outils RH</div>
              <div>sur <ModeLink>contact@laboiteaoutilsdesrh.com</ModeLink></div>
            </ModeCell>
            <ModeCell />
          </ModeBox>
          <SelectedCell><FillHandle /></SelectedCell>
        </Grid>
        <VScroll>
          <ScrollBtn><Tri dir="up" /></ScrollBtn>
          <VThumb />
          <VTrack />
          <ScrollBtn><Tri dir="down" /></ScrollBtn>
        </VScroll>
      </SheetArea>

      <SheetBar>
        <TabNav>
          <Tri dir="left" />
          <Tri dir="right" />
        </TabNav>
        <PlainTab $w={60} $on>Guide</PlainTab>
        <PlainTab $w={50}>TDB</PlainTab>
        <PlainTab $w={71}>Général</PlainTab>
        {colorTabs.map(([label, w, bg, fg, ml]) => (
          <ColorTab key={label} $w={w} $bg={bg} $fg={fg} $ml={ml}>{label}</ColorTab>
        ))}
        <PlusBtn>
          <svg width="9" height="9" viewBox="0 0 9 9"><path d="M4.5 0v9M0 4.5h9" stroke="#777" strokeWidth="1.5" /></svg>
        </PlusBtn>
        <BarDots>⋮</BarDots>
        <HScroll>
          <ScrollBtn $w={16}><Tri dir="left" /></ScrollBtn>
          <HThumb />
          <HTrack />
          <ScrollBtn $w={15}><Tri dir="right" /></ScrollBtn>
        </HScroll>
      </SheetBar>

      <StatusBar>
        PRÊT
        <MacroSlot><MacroIcon /></MacroSlot>
        <ViewGroup>
          <ViewBtn $w={38} $on><GridViewIcon /></ViewBtn>
          <ViewBtn $w={38}><PageViewIcon /></ViewBtn>
          <ViewBtn $w={38}><BreakViewIcon /></ViewBtn>
          <ZoomSign $ml={3}>-</ZoomSign>
          <Zoomer><ZoomThumb /></Zoomer>
          <ZoomSign>+</ZoomSign>
          <ZoomValue>100 %</ZoomValue>
        </ViewGroup>
      </StatusBar>

      <TaskBar>
        <TaskItem $w={36}><WinLogo /></TaskItem>
        <TaskItem $w={34}><Cortana /></TaskItem>
        <TaskItem $w={40}><TaskViewIcon /></TaskItem>
        <TaskItem $w={38}><EdgeMark>e</EdgeMark></TaskItem>
        <TaskItem $w={36}><FolderIcon /></TaskItem>
        <TaskItem $w={38}><ClockAppIcon /></TaskItem>
        <TaskItem $w={36} $open><ChromeIcon /></TaskItem>
        <TaskItem $w={38} $open><NoteIcon /></TaskItem>
        <TaskItem $w={36} $open><PsMark>PS</PsMark></TaskItem>
        <TaskItem $w={36} $on $open><XlLogo dark /></TaskItem>
        <Tray>
          <TaskItem $w={34}>
            <svg width="13" height="8" viewBox="0 0 13 8"><path d="M1 7l5.5-5.500L12 7" fill="none" stroke="#fff" /></svg>
          </TaskItem>
          <TaskItem $w={30}><PlugBattery /></TaskItem>
          <TaskItem $w={34}><NetIcon /></TaskItem>
          <TaskItem $w={28}><VolumeIcon /></TaskItem>
          <TaskItem $w={38}><PenIcon /></TaskItem>
          <TaskItem $w={26}><KeyboardIcon /></TaskItem>
          <TaskItem $w={46}>12:11</TaskItem>
          <TaskItem $w={32}><NotifyIcon /></TaskItem>
          <TaskItem $w={17} />
        </Tray>
      </TaskBar>
    </Page>
  );
}
